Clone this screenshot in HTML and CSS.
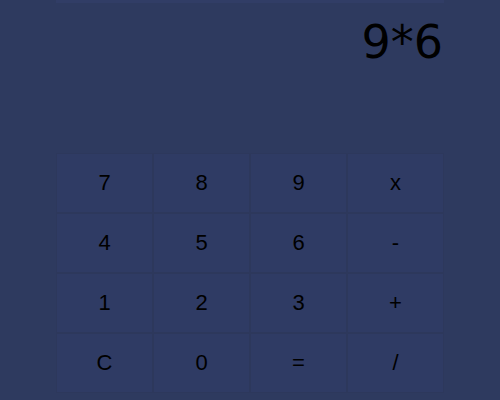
FILE: index.html
```html
<!DOCTYPE html>
<html>
<head>
<meta charset="utf-8">
<link rel="stylesheet" href="styles.css">
</head>
<body>
<div class="calc">
  <div class="display">9*6</div>
  <div class="keys">
    <button class="key">7</button>
    <button class="key">8</button>
    <button class="key">9</button>
    <button class="key">x</button>
    <button class="key">4</button>
    <button class="key">5</button>
    <button class="key">6</button>
    <button class="key">-</button>
    <button class="key">1</button>
    <button class="key">2</button>
    <button class="key">3</button>
    <button class="key">+</button>
    <button class="key">C</button>
    <button class="key">0</button>
    <button class="key">=</button>
    <button class="key">/</button>
  </div>
</div>
</body>
</html>
```
FILE: styles.css
```css
html, body {
  margin: 0;
  padding: 0;
  background: #2e3a5f;
  width: 500px;
  height: 400px;
  overflow: hidden;
}
.calc {
  width: 388px;
  margin: 0 auto;
  border-top: 3px solid #313d66;
}
.display {
  height: 150px;
  box-sizing: border-box;
  padding: 9px 1px 0 0;
  text-align: right;
  font-family: "DejaVu Sans", sans-serif;
  font-size: 46px;
  line-height: 60px;
  color: #000;
}
.keys {
  display: grid;
  grid-template-columns: repeat(4, 1fr);
  grid-auto-rows: 60px;
}
.key {
  background: #2f3b64;
  border: 1px solid #2d385c;
  margin: 0;
  padding: 0;
  font-family: "Liberation Sans", Arial, sans-serif;
  font-size: 22px;
  color: #000;
}
```
